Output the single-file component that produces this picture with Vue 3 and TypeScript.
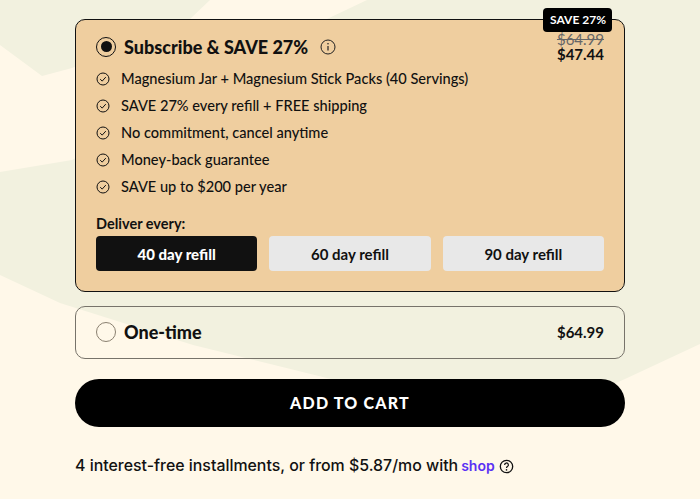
<script setup lang="ts">
const benefits: string[] = [
  'Magnesium Jar + Magnesium Stick Packs (40 Servings)',
  'SAVE 27% every refill + FREE shipping',
  'No commitment, cancel anytime',
  'Money-back guarantee',
  'SAVE up to $200 per year',
]
const refills: string[] = ['40 day refill', '60 day refill', '90 day refill']
</script>

<template>
  <div class="page">
    <svg class="bg" viewBox="0 0 700 499" aria-hidden="true">
      <polygon fill="#f2f1df" points="0,0 700,0 700,344 625,379 520,425 343,382 193,345 60,303 0,275" />
      <polygon fill="#fff8e9" points="0,45 42,76 72,68 190,19 210,0 367,0 327,19 72,160 0,172" />
    </svg>
    <main class="content">
      <section class="card active">
        <span class="badge">SAVE 27%</span>
        <div class="head">
          <span class="radio on"><i></i></span>
          <strong class="title">Subscribe &amp; SAVE 27%</strong>
          <svg class="info" viewBox="0 0 16 16" width="16" height="16">
            <circle cx="8" cy="8" r="7" fill="none" stroke="#222" stroke-width="1" />
            <path d="M8 7v4.4" stroke="#222" stroke-width="1.2" fill="none" />
            <circle cx="8" cy="4.8" r=".8" fill="#222" />
          </svg>
          <div class="prices">
            <s>$64.99</s>
            <b>$47.44</b>
          </div>
        </div>
        <ul class="list">
          <li v-for="b in benefits" :key="b">
            <svg viewBox="0 0 14 14" width="14" height="14">
              <circle cx="7" cy="7" r="6" fill="none" stroke="#111" stroke-width="1" />
              <path d="M4.2 7.2l2 1.9 3.6-4" fill="none" stroke="#111" stroke-width="1" />
            </svg>
            <span>{{ b }}</span>
          </li>
        </ul>
        <p class="deliver">Deliver every:</p>
        <div class="refills">
          <button v-for="(r, i) in refills" :key="r" :class="{ sel: i === 0 }">{{ r }}</button>
        </div>
      </section>

      <section class="card once">
        <span class="radio"></span>
        <strong class="title">One-time</strong>
        <b class="price">$64.99</b>
      </section>

      <button class="cart">ADD TO CART</button>

      <p class="pay">
        <span>4 interest-free installments, or from $5.87/mo with</span>
        <span class="shop">shop</span>
        <svg viewBox="0 0 16 16" width="15" height="15">
          <circle cx="8" cy="8" r="6.6" fill="none" stroke="#111" stroke-width="1.4" />
          <path d="M6 6.3a2 2 0 1 1 3 1.7c-.7.4-1 .8-1 1.6" fill="none" stroke="#111" stroke-width="1.3" />
          <circle cx="8" cy="11.6" r=".85" fill="#111" />
        </svg>
      </p>
    </main>
  </div>
</template>

<style>
html, body { margin: 0; background: #fff8e9; }
</style>

<style scoped>
.page {
  position: relative;
  width: 700px;
  height: 499px;
  overflow: hidden;
  font-family: "Lato", "Noto Sans", sans-serif;
  color: #111;
}
.bg { position: absolute; inset: 0; width: 700px; height: 499px; }
.content {
  position: relative;
  width: 550px;
  margin: 0 auto;
  padding-top: 19px;
  display: flex;
  flex-direction: column;
}
.card { position: relative; box-sizing: border-box; border-radius: 10px; }
.active {
  height: 273px;
  background: #efce9f;
  border: 1px solid #111;
  padding: 15px 20px 0;
}
.badge {
  position: absolute;
  top: -12px;
  right: 12px;
  background: #000;
  color: #fff;
  border-radius: 4px;
  font-size: 12px;
  font-weight: 700;
  line-height: 24px;
  padding: 0 6px 0 7px;
}
.head { display: flex; align-items: center; height: 23px; }
.radio {
  box-sizing: border-box;
  width: 20px;
  height: 20px;
  border: 1px solid #8a8070;
  border-radius: 50%;
  display: flex;
  align-items: center;
  justify-content: center;
  flex: none;
}
.radio.on { border-color: #111; }
.radio i { width: 11px; height: 11px; background: #111; border-radius: 50%; }
.title { margin-left: 8px; font-size: 18px; font-weight: 900; }
.info { margin-left: 12px; }
.prices {
  margin-left: auto;
  display: flex;
  flex-direction: column;
  align-items: flex-end;
  font-size: 15px;
  line-height: 15px;
  margin-top: 1px;
}
.prices s { color: #666; }
.list { list-style: none; margin: 7px 0 0; padding: 0; }
.list li {
  display: flex;
  align-items: center;
  height: 27px;
  font-size: 14.6px;
  font-weight: 500;
  gap: 11px;
}
.deliver { margin: 15px 0 3px; font-size: 14.5px; font-weight: 700; line-height: 18px; }
.refills { display: grid; grid-template-columns: repeat(3, 1fr); gap: 12px; }
.refills button {
  height: 35px;
  border: 0;
  border-radius: 4px;
  background: #e8e8e8;
  color: #111;
  font: 700 15px "Lato", sans-serif;
}
.refills .sel { background: #111; color: #fff; font-weight: 900; }
.once {
  margin-top: 14px;
  height: 53px;
  border: 1px solid #77736a;
  display: flex;
  align-items: center;
  padding: 0 20px 1px;
}
.price { margin-left: auto; font-size: 15px; }
.cart {
  margin-top: 20px;
  height: 48px;
  border: 0;
  border-radius: 24px;
  background: #000;
  color: #fff;
  font: 900 16px "Lato", sans-serif;
  letter-spacing: 1.2px;
  padding-bottom: 2px;
}
.pay {
  margin: 29px 0 0;
  display: flex;
  align-items: center;
  gap: 3px;
  font: 500 15.9px "Inter", sans-serif;
  line-height: 20px;
}
.shop { color: #5a31f4; font-weight: 600; font-size: 14px; margin-right: 1px; }
</style>
